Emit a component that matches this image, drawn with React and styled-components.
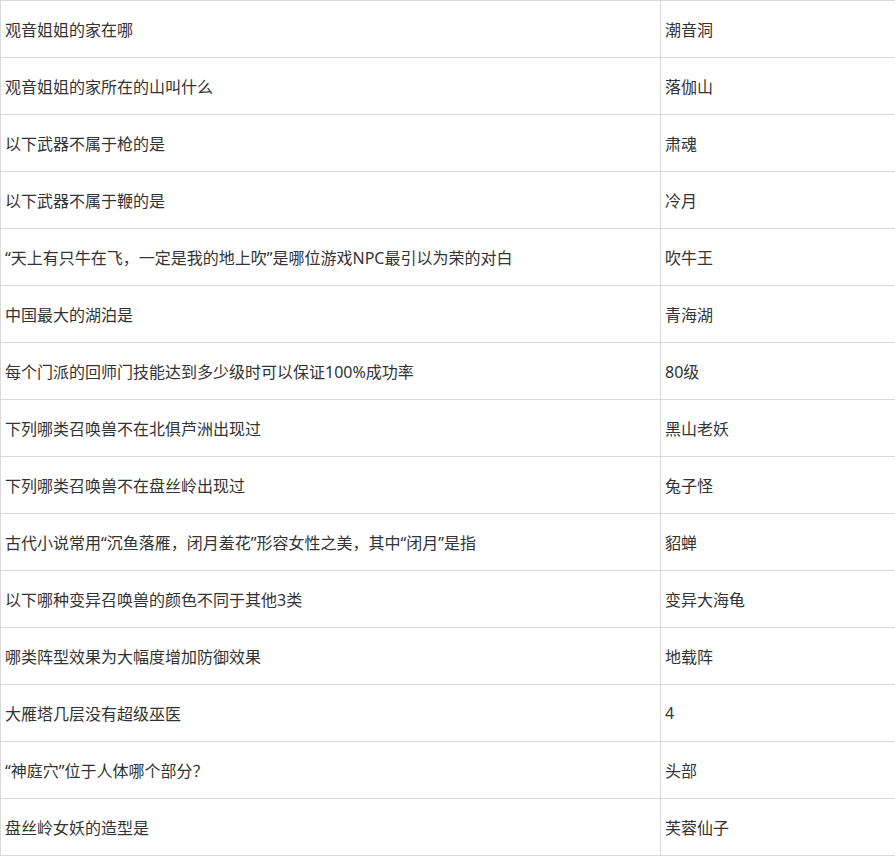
import styled, { createGlobalStyle } from 'styled-components';

const GlobalStyle = createGlobalStyle`
  html, body {
    margin: 0;
    padding: 0;
    background: #fff;
    overflow: hidden;
  }
  body {
    font-family: "Noto Sans", "Noto Sans CJK SC", sans-serif;
  }
`;

const Page = styled.div`
  width: 895px;
  overflow: hidden;
`;

const Table = styled.table`
  width: 920px;
  border-collapse: collapse;
  table-layout: fixed;
  color: #333;
  font-size: 16px;
`;

const Cell = styled.td`
  height: 55px;
  padding: 0 4px 1px;
  border: 1px solid #d9d9d9;
  vertical-align: middle;
  white-space: nowrap;
  width: ${(p) => (p.$question ? '651px' : 'auto')};
`;

const rows = [
  ['观音姐姐的家在哪', '潮音洞'],
  ['观音姐姐的家所在的山叫什么', '落伽山'],
  ['以下武器不属于枪的是', '肃魂'],
  ['以下武器不属于鞭的是', '冷月'],
  ['“天上有只牛在飞，一定是我的地上吹”是哪位游戏NPC最引以为荣的对白', '吹牛王'],
  ['中国最大的湖泊是', '青海湖'],
  ['每个门派的回师门技能达到多少级时可以保证100%成功率', '80级'],
  ['下列哪类召唤兽不在北俱芦洲出现过', '黑山老妖'],
  ['下列哪类召唤兽不在盘丝岭出现过', '兔子怪'],
  ['古代小说常用“沉鱼落雁，闭月羞花”形容女性之美，其中“闭月”是指', '貂蝉'],
  ['以下哪种变异召唤兽的颜色不同于其他3类', '变异大海龟'],
  ['哪类阵型效果为大幅度增加防御效果', '地载阵'],
  ['大雁塔几层没有超级巫医', '4'],
  ['“神庭穴”位于人体哪个部分？', '头部'],
  ['盘丝岭女妖的造型是', '芙蓉仙子'],
];

const App = () => (
  <Page>
    <GlobalStyle />
    <Table>
      <tbody>
        {rows.map(([q, a]) => (
          <tr key={q}>
            <Cell $question>{q}</Cell>
            <Cell>{a}</Cell>
          </tr>
        ))}
      </tbody>
    </Table>
  </Page>
);

export default App;
